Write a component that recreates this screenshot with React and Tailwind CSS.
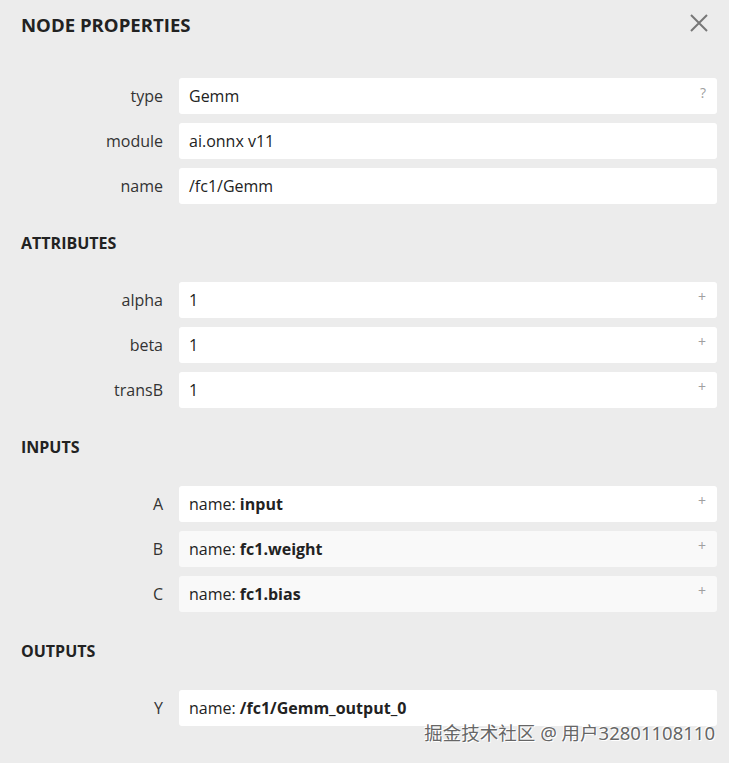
import React from "react";

const font = { fontFamily: '"Open Sans", "Noto Sans", sans-serif' };

function Row({ label, children, icon = "+", tint = false }) {
  return (
    <div className="flex items-center h-9 mt-[9px] first:mt-0">
      <div className="w-[158px] pr-[16px] text-right text-[16px] text-[#333]">{label}</div>
      <div
        className={
          "relative flex-1 h-9 rounded-[3px] flex items-center pl-[10px] text-[16px] text-[#222] " +
          (tint ? "bg-[#f9f9f9]" : "bg-white")
        }
      >
        {children}
        <span className="absolute right-[11px] top-[4px] text-[14px] text-[#a0a0a0]">{icon}</span>
      </div>
    </div>
  );
}

function Section({ title }) {
  return (
    <div className="h-[78px] flex items-center text-[16px] font-bold text-[#222]">
      {title}
    </div>
  );
}

export default function App() {
  return (
    <div className="relative w-[729px] h-[763px] bg-[#ececec] pl-[21px] pr-[12px] overflow-hidden" style={font}>
      <div className="h-[50px] flex items-center justify-between">
        <div className="text-[18.6px] font-bold text-[#222]">NODE PROPERTIES</div>
        <svg width="18" height="18" viewBox="0 0 18 18" className="mr-[9px] mb-[4px]">
          <path d="M1 1 L17 17 M17 1 L1 17" stroke="#777" strokeWidth="2" />
        </svg>
      </div>
      <div className="mt-[28px]">
        <Row label="type" icon="?">Gemm</Row>
        <Row label="module" icon="">ai.onnx v11</Row>
        <Row label="name" icon="">/fc1/Gemm</Row>
      </div>
      <Section title="ATTRIBUTES" />
      <div>
        <Row label="alpha">1</Row>
        <Row label="beta">1</Row>
        <Row label="transB">1</Row>
      </div>
      <Section title="INPUTS" />
      <div>
        <Row label="A">
          name:&nbsp;<b>input</b>
        </Row>
        <Row label="B" tint>
          name:&nbsp;<b>fc1.weight</b>
        </Row>
        <Row label="C" tint>
          name:&nbsp;<b>fc1.bias</b>
        </Row>
      </div>
      <Section title="OUTPUTS" />
      <div>
        <Row label="Y" icon="">
          name:&nbsp;<b>/fc1/Gemm_output_0</b>
        </Row>
      </div>
      <div
        className="absolute right-[14px] bottom-[16px] text-[18.5px] text-[#666] [text-shadow:1px_1px_0_#fff,-1px_-1px_0_#fff]"
        style={{ fontFamily: '"Noto Sans", "Noto Sans CJK SC", sans-serif' }}
      >
        掘金技术社区 @ 用户32801108110
      </div>
    </div>
  );
}
